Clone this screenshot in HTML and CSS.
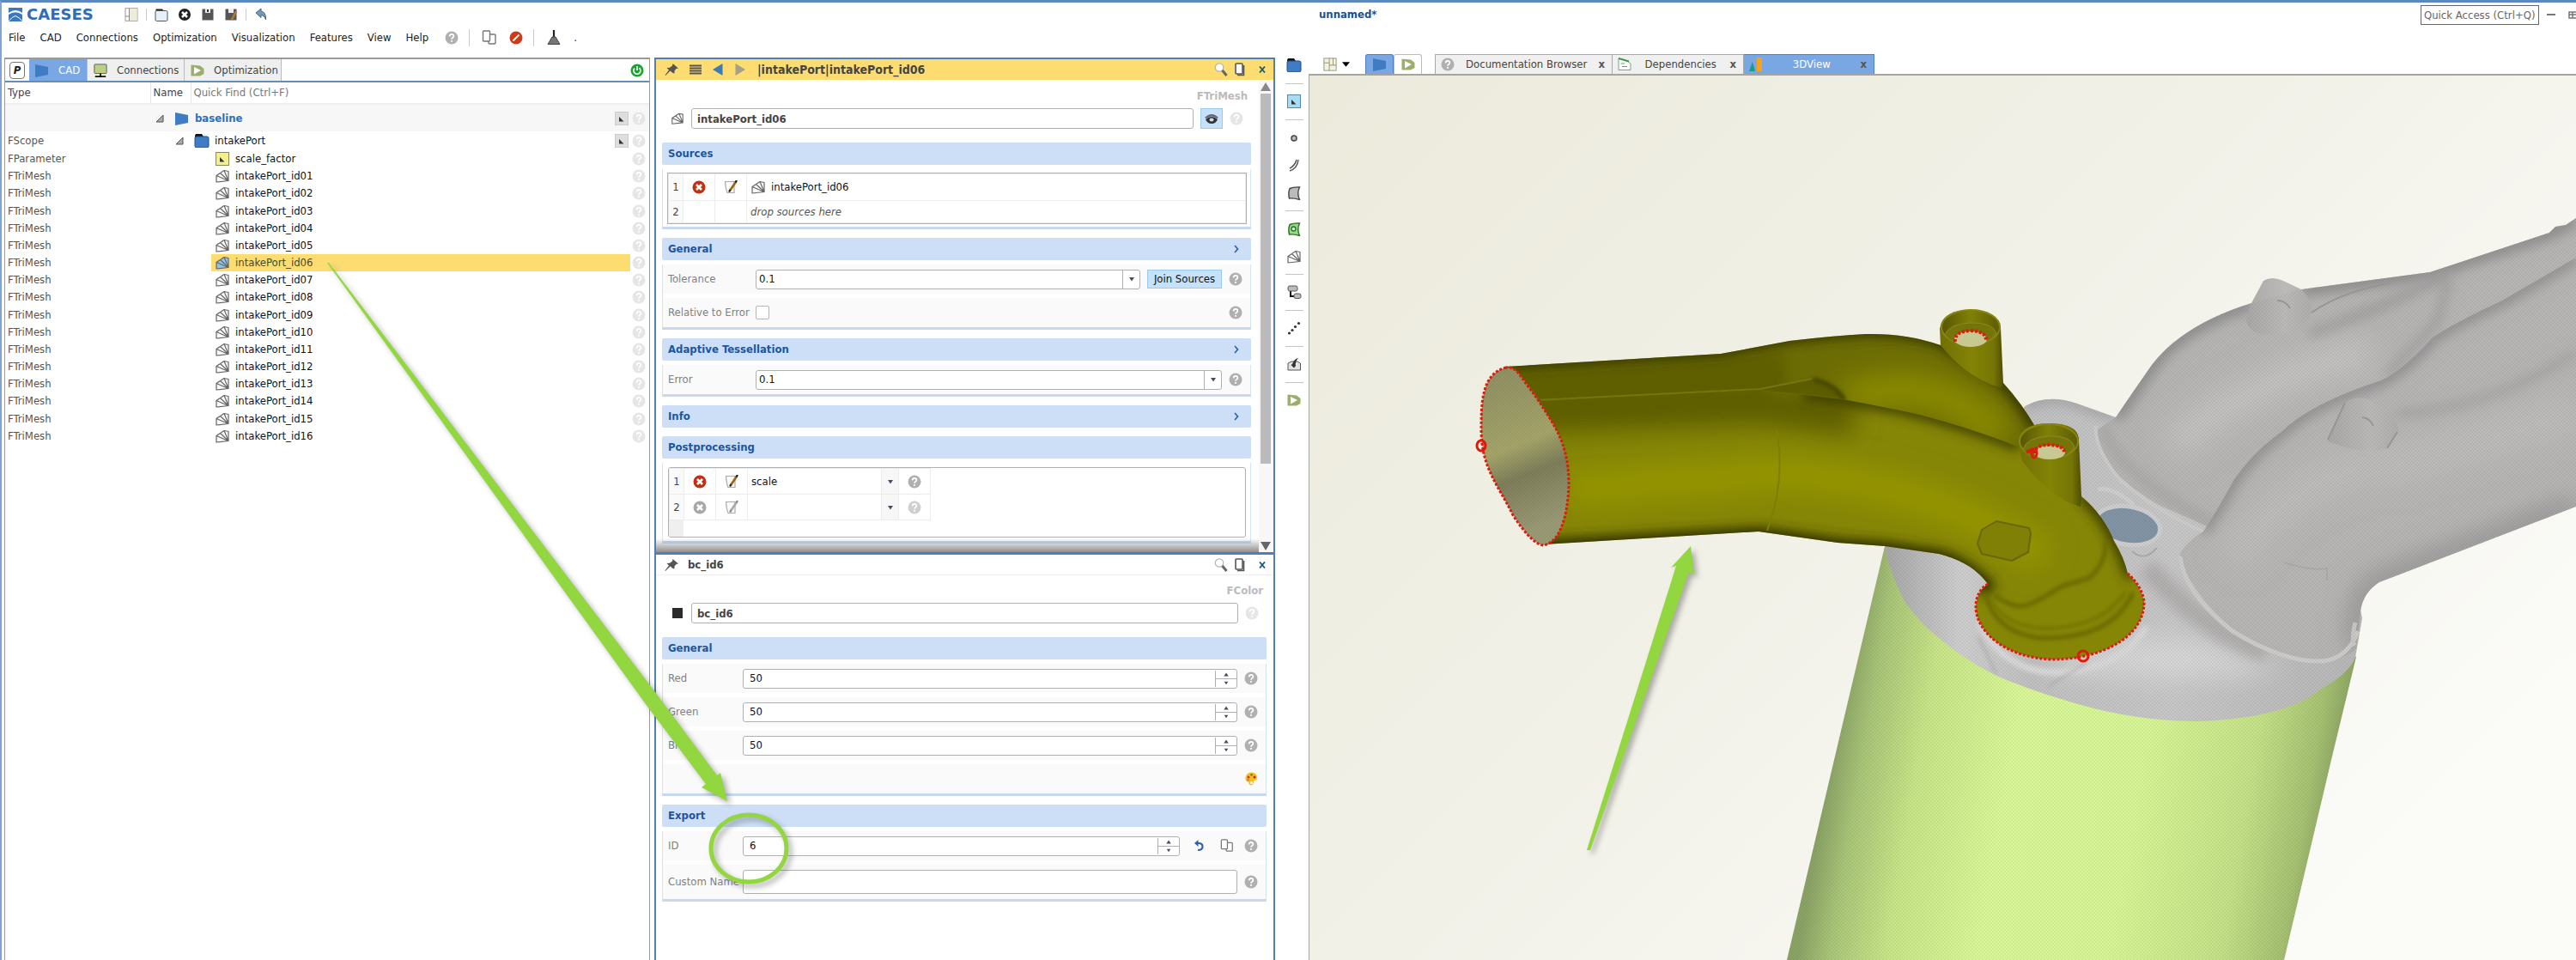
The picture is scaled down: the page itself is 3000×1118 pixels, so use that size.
FILE: index.html
```html
<!DOCTYPE html>
<html lang="en">
<head>
<meta charset="utf-8">
<title>CAESES - unnamed*</title>
<link rel="stylesheet" href="styles.css">
</head>
<body>
<svg class="sprite" aria-hidden="true">
  <symbol id="help" viewBox="0 0 16 16"><circle cx="8" cy="8" r="7.5" fill="currentColor"/><path d="M5.6 6.4Q5.700 3.900 8 3.900T10.400 6Q10.400 7.100 9.200 7.800T8 9.800" fill="none" stroke="#fff" stroke-width="1.700"/><rect x="7.100" y="11" width="1.800" height="1.800" fill="#fff"/></symbol>
  <symbol id="mesh" viewBox="0 0 18 16"><path d="M2 7.500 11 1.500 16 2.500V13.500L2 15Z" fill="var(--fill,#fafafa)"/><path d="M2 7.500 11 1.500 16 2.500V13.500L2 15ZM2 7.500 16 13.500 6.500 4.500M16 13.500 11 1.500" fill="none" stroke="#666" stroke-width="1.200" stroke-linejoin="round"/></symbol>
  <symbol id="trapezoid" viewBox="0 0 18 16"><path d="M1 1 16 4V13L1 16Z" fill="#3f7cc4"/></symbol>
  <symbol id="scope" viewBox="0 0 18 16"><path d="M2 0H9L11 3V8H1V2Z" fill="#111"/><rect x="1" y="3" width="16" height="13" rx="2" fill="#3f7cc4" stroke="#1d4f8c"/></symbol>
  <symbol id="param" viewBox="0 0 16 16"><rect x=".5" y=".5" width="15" height="15" fill="var(--fill,#f3f08d)" stroke="var(--edge,#8a8a55)"/><path d="M5 6V11.500H10.500Z" fill="#333"/></symbol>
  <symbol id="tri" viewBox="0 0 10 10"><path d="M9 1V9H1Z" fill="#aaa" stroke="#555"/></symbol>
  <symbol id="play" viewBox="0 0 18 16"><path d="M1.500 1.500 12 2.500 16.500 6V12L12 14.500H1.500Z" fill="#9bae6c"/><path d="M5 4 13 8 5 12.500Z" fill="#fff"/></symbol>
  <symbol id="delete" viewBox="0 0 16 16"><circle cx="8" cy="8" r="7.500" fill="var(--fill,#c22f12)"/><path d="M5 5 11 11M11 5 5 11" stroke="#fff" stroke-width="2.600"/></symbol>
  <symbol id="edit" viewBox="0 0 16 16"><path d="M1.500 1.500H12V14.500H4Q2 10 1.500 1.500Z" fill="#fafafa" stroke="#aaa" stroke-width="1.200"/><path d="M14.500 1 7 12" stroke="var(--pen,#9a6310)" stroke-width="2.600"/><path d="M15 0 13.500 2.500M7.500 11 6 13.500" stroke="var(--tip,#222)" stroke-width="2.200"/></symbol>
  <symbol id="pin" viewBox="0 0 18 16"><path d="M10.500 1 17 6.500 14.500 7 12.500 9.500 12.500 12.500 10.500 12 7.500 9.500 2 15 1.500 14.500 6 8.500 3.500 6 7 5.800 10 3.500Z" fill="#555"/></symbol>
  <symbol id="search" viewBox="0 0 16 16"><circle cx="6" cy="5.500" r="4.700" fill="#fff" stroke="#b5b5a8" stroke-width="1.300"/><path d="M9.500 9 14.500 15" stroke="#666" stroke-width="3"/></symbol>
  <symbol id="window" viewBox="0 0 12 16"><rect x="1" y="1" width="8" height="12" rx="1" fill="#fff" stroke="#555" stroke-width="1.600"/><path d="M10.500 3V14.500H3" fill="none" stroke="#555" stroke-width="1.600"/></symbol>
  <symbol id="copy" viewBox="0 0 18 18"><rect x="8" y="5" width="8" height="11" rx="1" fill="#fff" stroke="#777" stroke-width="1.400"/><rect x="1.500" y="1" width="8" height="12" rx="1" fill="#fff" stroke="#777" stroke-width="1.400"/></symbol>
  <symbol id="close" viewBox="0 0 8 8"><path d="M1 0.500 7 7.500M7 0.500 1 7.500" stroke="#1c5a70" stroke-width="1.800"/></symbol>
  <symbol id="down" viewBox="0 0 8 6"><path d="M1 1H7L4 5.500Z" fill="#444c66"/></symbol>
  <symbol id="up" viewBox="0 0 8 6"><path d="M1 5H7L4 .5Z" fill="#444c66"/></symbol>
  <symbol id="chev" viewBox="0 0 6 10"><path d="M1 1 4.500 5 1 9" fill="none" stroke="#2b62a8" stroke-width="1.700"/></symbol>
  <symbol id="layout" viewBox="0 0 18 18"><rect x="1" y="1" width="16" height="16" fill="#f3f3df" stroke="#8c8c78"/><path d="M8 1V17M1 7H8M8 10H17M13 1V10" stroke="#8c8c78"/></symbol>
</svg>

<div class="app">
  <header class="top">
    <div class="top-left">
      <div class="titlebar">
        <svg class="logo-mark" viewBox="0 0 16 16" aria-hidden="true"><rect width="16" height="16" fill="#3a78c0"/><path d="M0 6Q8 0 16 6V8Q8 2.500 0 8Z" fill="#fff"/><path d="M0 15.500Q5 10 8 9.500 12 11 16 15.500" fill="none" stroke="#fff"/></svg>
        <span class="logo">CAESES</span>
        <div class="quick">
          <button aria-label="Layout"><svg viewBox="0 0 16 16"><rect x="1" y=".7" width="14" height="14.600" fill="#fff" stroke="#999"/><rect x="6" y="1" width="8.500" height="14" fill="#eeedd8"/><path d="M5.500 1V15M1 10H5.500" stroke="#888"/></svg></button>
          <i class="bar"></i>
          <button aria-label="Open"><svg viewBox="0 0 16 16"><path d="M1.500 1.500H9L11 4H1.500Z" fill="#222"/><rect x="1" y="3.500" width="14" height="12" rx="1.500" fill="#e4f0fa" stroke="#555"/></svg></button>
          <button aria-label="Close project"><svg viewBox="0 0 16 16"><circle cx="8" cy="8" r="7" fill="#222"/><path d="M5 5 11 11M11 5 5 11" stroke="#fff" stroke-width="2.500"/></svg></button>
          <button aria-label="Save"><svg viewBox="0 0 16 16"><path d="M1.500 1.500H14.500V14.500H1.500Z" fill="#555"/><path d="M5 1V6H11V1Z" fill="#eee"/><path d="M8 2V5" stroke="#333" stroke-width="2"/></svg></button>
          <button aria-label="Save as"><svg viewBox="0 0 16 16"><path d="M1.500 1.500H14.500V14.500H1.500Z" fill="#555"/><path d="M5 1V6H11V1Z" fill="#eee"/><path d="M14 4 9 14" stroke="#b07b35" stroke-width="2.500"/></svg></button>
          <i class="bar"></i>
          <button aria-label="Undo"><svg viewBox="0 0 16 16"><path d="M2 6 8 1V4Q14 5 13.500 14 12 9 8 8.500V11.500Z" fill="#6f9db5" stroke="#47697c"/></svg></button>
        </div>
      </div>
      <nav class="menu">
        <a href="#">File</a><a href="#">CAD</a><a href="#">Connections</a><a href="#">Optimization</a><a href="#">Visualization</a><a href="#">Features</a><a href="#">View</a><a href="#">Help</a>
        <div class="menu-tools">
          <svg class="i16 gray"><use href="#help"/></svg>
          <i class="bar tall"></i>
          <svg class="i18"><use href="#copy"/></svg>
          <svg class="i16" viewBox="0 0 16 16"><circle cx="8" cy="8" r="7.500" fill="#cc3a18"/><path d="M4.500 11.500 11.500 4.500" stroke="#fff" stroke-width="2"/></svg>
          <i class="bar tall"></i>
          <svg class="i18" viewBox="0 0 18 18"><path d="M9 0V9" stroke="#222" stroke-width="2.200"/><path d="M7 8H11L16 16.500H2Z" fill="#777" stroke="#444"/></svg>
          <span>.</span>
        </div>
      </nav>
    </div>
    <div class="top-right">
      <h1>unnamed*</h1>
      <input class="quick-access" aria-label="Quick Access" placeholder="Quick Access (Ctrl+Q)">
      <button class="win" aria-label="Minimize"><svg viewBox="0 0 12 12"><path d="M1 6H11" stroke="#777" stroke-width="2"/></svg></button>
      <button class="win restore" aria-label="Restore"><svg viewBox="0 0 9 12"><path d="M9 3H1V10H9M5 3V10M1 6H9" fill="none" stroke="#777" stroke-width="1.500"/></svg></button>
    </div>
  </header>

  <main class="main">
    <section class="tree">
      <div class="tree-tabs">
        <button class="p-tab"><b>P</b></button>
        <button class="tab active w-cad"><svg class="icon"><use href="#trapezoid"/></svg>CAD</button>
        <button class="tab w-con"><svg class="icon" viewBox="0 0 18 18"><rect x="1" y="1" width="16" height="12" rx="1" fill="#bccf84" stroke="#555"/><path d="M9 13V16M2 17H16" stroke="#111" stroke-width="2"/></svg>Connections</button>
        <button class="tab w-opt"><svg class="icon"><use href="#play"/></svg>Optimization</button>
        <svg class="i16 refresh" viewBox="0 0 16 16"><circle cx="8" cy="8" r="7.500" fill="#17a52c"/><path d="M5 5.500A4 4 0 1 0 10.500 5.200M8 3V8" fill="none" stroke="#fff" stroke-width="1.700"/></svg>
      </div>
      <table class="objects">
        <colgroup><col class="c-type"><col class="c-name"><col><col class="c-help"></colgroup>
        <thead><tr><th>Type</th><th>Name</th><th colspan="2" class="find">Quick Find (Ctrl+F)</th></tr></thead>
        <tbody>
          <tr class="root"><td></td><td colspan="2"><div class="node l0"><svg class="tw"><use href="#tri"/></svg><svg class="icon"><use href="#trapezoid"/></svg><b>baseline</b><svg class="badge"><use href="#param"/></svg></div></td><td><svg class="i16 faint"><use href="#help"/></svg></td></tr>
          <tr class="scope"><td>FScope</td><td colspan="2"><div class="node l1"><svg class="tw"><use href="#tri"/></svg><svg class="icon"><use href="#scope"/></svg>intakePort<svg class="badge"><use href="#param"/></svg></div></td><td><svg class="i16 faint"><use href="#help"/></svg></td></tr>
          <tr><td>FParameter</td><td colspan="2"><div class="node l2"><svg class="icon"><use href="#param"/></svg>scale_factor</div></td><td><svg class="i16 faint"><use href="#help"/></svg></td></tr>
          <tr><td>FTriMesh</td><td colspan="2"><div class="node l2"><svg class="icon"><use href="#mesh"/></svg>intakePort_id01</div></td><td><svg class="i16 faint"><use href="#help"/></svg></td></tr>
          <tr><td>FTriMesh</td><td colspan="2"><div class="node l2"><svg class="icon"><use href="#mesh"/></svg>intakePort_id02</div></td><td><svg class="i16 faint"><use href="#help"/></svg></td></tr>
          <tr><td>FTriMesh</td><td colspan="2"><div class="node l2"><svg class="icon"><use href="#mesh"/></svg>intakePort_id03</div></td><td><svg class="i16 faint"><use href="#help"/></svg></td></tr>
          <tr><td>FTriMesh</td><td colspan="2"><div class="node l2"><svg class="icon"><use href="#mesh"/></svg>intakePort_id04</div></td><td><svg class="i16 faint"><use href="#help"/></svg></td></tr>
          <tr><td>FTriMesh</td><td colspan="2"><div class="node l2"><svg class="icon"><use href="#mesh"/></svg>intakePort_id05</div></td><td><svg class="i16 faint"><use href="#help"/></svg></td></tr>
          <tr><td>FTriMesh</td><td colspan="2"><div class="node l2 selected"><svg class="icon"><use href="#mesh"/></svg>intakePort_id06</div></td><td><svg class="i16 faint"><use href="#help"/></svg></td></tr>
          <tr><td>FTriMesh</td><td colspan="2"><div class="node l2"><svg class="icon"><use href="#mesh"/></svg>intakePort_id07</div></td><td><svg class="i16 faint"><use href="#help"/></svg></td></tr>
          <tr><td>FTriMesh</td><td colspan="2"><div class="node l2"><svg class="icon"><use href="#mesh"/></svg>intakePort_id08</div></td><td><svg class="i16 faint"><use href="#help"/></svg></td></tr>
          <tr><td>FTriMesh</td><td colspan="2"><div class="node l2"><svg class="icon"><use href="#mesh"/></svg>intakePort_id09</div></td><td><svg class="i16 faint"><use href="#help"/></svg></td></tr>
          <tr><td>FTriMesh</td><td colspan="2"><div class="node l2"><svg class="icon"><use href="#mesh"/></svg>intakePort_id10</div></td><td><svg class="i16 faint"><use href="#help"/></svg></td></tr>
          <tr><td>FTriMesh</td><td colspan="2"><div class="node l2"><svg class="icon"><use href="#mesh"/></svg>intakePort_id11</div></td><td><svg class="i16 faint"><use href="#help"/></svg></td></tr>
          <tr><td>FTriMesh</td><td colspan="2"><div class="node l2"><svg class="icon"><use href="#mesh"/></svg>intakePort_id12</div></td><td><svg class="i16 faint"><use href="#help"/></svg></td></tr>
          <tr><td>FTriMesh</td><td colspan="2"><div class="node l2"><svg class="icon"><use href="#mesh"/></svg>intakePort_id13</div></td><td><svg class="i16 faint"><use href="#help"/></svg></td></tr>
          <tr><td>FTriMesh</td><td colspan="2"><div class="node l2"><svg class="icon"><use href="#mesh"/></svg>intakePort_id14</div></td><td><svg class="i16 faint"><use href="#help"/></svg></td></tr>
          <tr><td>FTriMesh</td><td colspan="2"><div class="node l2"><svg class="icon"><use href="#mesh"/></svg>intakePort_id15</div></td><td><svg class="i16 faint"><use href="#help"/></svg></td></tr>
          <tr><td>FTriMesh</td><td colspan="2"><div class="node l2"><svg class="icon"><use href="#mesh"/></svg>intakePort_id16</div></td><td><svg class="i16 faint"><use href="#help"/></svg></td></tr>
        </tbody>
      </table>
    </section>

    <section class="editors">
      <article class="editor first">
        <div class="editor-title yellow">
          <svg class="icon"><use href="#pin"/></svg>
          <svg class="i14" viewBox="0 0 14 14"><path d="M0 2.500H14M0 5.500H14M0 8.500H14M0 11.500H14" stroke="#555" stroke-width="2"/></svg>
          <button aria-label="Back"><svg viewBox="0 0 14 14"><path d="M12.500 0V14L1 7Z" fill="#3d7cae"/></svg></button>
          <button aria-label="Forward"><svg viewBox="0 0 14 14"><path d="M1.500 0V14L13 7Z" fill="#a5a088"/></svg></button>
          <h2>|intakePort|intakePort_id06</h2>
          <span class="title-tools"><svg class="i16"><use href="#search"/></svg><svg class="w12"><use href="#window"/></svg><svg class="x"><use href="#close"/></svg></span>
        </div>
        <div class="scroller">
          <div class="form wide-labels">
            <p class="kind">FTriMesh</p>
            <div class="name-row">
              <svg class="i16"><use href="#mesh"/></svg>
              <input aria-label="Name" value="intakePort_id06">
              <button class="eye" aria-label="Visible"><svg viewBox="0 0 16 16"><path d="M0 7Q8-1 16 7L14 8Q8 3 2 8Z" fill="#667"/><path d="M1 9Q8 3 15 9 13 14 8 14T1 9Z" fill="#333"/><ellipse cx="8" cy="9.500" rx="2.500" ry="2" fill="#cde"/></svg></button>
              <svg class="i16 faint"><use href="#help"/></svg>
            </div>
            <section class="group">
              <h3>Sources</h3>
              <div class="body boxed">
                <table class="list sources">
                  <colgroup><col class="n"><col class="b"><col class="b"><col></colgroup>
                  <tr class="used"><td>1</td><td><svg class="i16"><use href="#delete"/></svg></td><td><svg class="i16"><use href="#edit"/></svg></td><td class="txt"><div><svg class="icon"><use href="#mesh"/></svg>intakePort_id06</div></td></tr>
                  <tr><td>2</td><td></td><td></td><td class="txt drop">drop sources here</td></tr>
                </table>
              </div>
            </section>
            <section class="group">
              <h3>General<svg class="chev"><use href="#chev"/></svg></h3>
              <div class="body">
                <div class="row"><label for="tol">Tolerance</label><span class="combo"><select id="tol"><option>0.1</option></select><i><svg><use href="#down"/></svg></i></span><button class="join">Join Sources</button><svg class="i16 gray"><use href="#help"/></svg></div>
                <div class="row"><label for="rel">Relative to Error</label><input type="checkbox" id="rel"><svg class="i16 gray end"><use href="#help"/></svg></div>
              </div>
            </section>
            <section class="group">
              <h3>Adaptive Tessellation<svg class="chev"><use href="#chev"/></svg></h3>
              <div class="body">
                <div class="row"><label for="err">Error</label><span class="combo"><select id="err"><option>0.1</option></select><i><svg><use href="#down"/></svg></i></span><svg class="i16 gray"><use href="#help"/></svg></div>
              </div>
            </section>
            <section class="group"><h3>Info<svg class="chev"><use href="#chev"/></svg></h3></section>
            <section class="group">
              <h3>Postprocessing</h3>
              <div class="body boxed">
                <div class="list-frame">
                  <table class="list post">
                    <colgroup><col class="n"><col class="b"><col class="b"><col class="s"><col class="a"><col class="b"></colgroup>
                    <tr><td>1</td><td><svg class="i16"><use href="#delete"/></svg></td><td><svg class="i16"><use href="#edit"/></svg></td><td class="txt">scale</td><td class="arrow"><svg class="dn"><use href="#down"/></svg></td><td><svg class="i16 gray"><use href="#help"/></svg></td></tr>
                    <tr class="off"><td>2</td><td><svg class="i16"><use href="#delete"/></svg></td><td><svg class="i16"><use href="#edit"/></svg></td><td></td><td class="arrow"><svg class="dn"><use href="#down"/></svg></td><td><svg class="i16 pale"><use href="#help"/></svg></td></tr>
                  </table>
                  <i class="gutter"></i>
                </div>
              </div>
            </section>
          </div>
          <div class="scrollbar"><svg viewBox="0 0 12 10"><path d="M6 0 12 10H0Z" fill="#888"/></svg><i></i><svg viewBox="0 0 12 10"><path d="M0 0H12L6 10Z" fill="#666"/></svg></div>
        </div>
      </article>
      <article class="editor second">
        <div class="editor-title">
          <svg class="icon"><use href="#pin"/></svg>
          <h2>bc_id6</h2>
          <span class="title-tools"><svg class="i16"><use href="#search"/></svg><svg class="w12"><use href="#window"/></svg><svg class="x"><use href="#close"/></svg></span>
        </div>
        <div class="form">
          <p class="kind">FColor</p>
          <div class="name-row">
            <i class="swatch"></i>
            <input aria-label="Name" value="bc_id6">
            <svg class="i16 faint"><use href="#help"/></svg>
          </div>
          <section class="group">
            <h3>General</h3>
            <div class="body">
              <div class="row"><label for="r">Red</label><span class="spin"><input id="r" type="number" value="50"><i><svg><use href="#up"/></svg><svg><use href="#down"/></svg></i></span><svg class="i16 gray"><use href="#help"/></svg></div>
              <div class="row"><label for="g">Green</label><span class="spin"><input id="g" type="number" value="50"><i><svg><use href="#up"/></svg><svg><use href="#down"/></svg></i></span><svg class="i16 gray"><use href="#help"/></svg></div>
              <div class="row"><label for="b">Blue</label><span class="spin"><input id="b" type="number" value="50"><i><svg><use href="#up"/></svg><svg><use href="#down"/></svg></i></span><svg class="i16 gray"><use href="#help"/></svg></div>
              <div class="row"><svg class="i16 end" viewBox="0 0 16 16"><path d="M8.500 0.500Q15 1 15 7 15 10 11.500 10 11 15 8.500 15.500 5 15.500 5.500 12 1 11 1.500 7 2 1 8.500 .5Z" fill="#f5bd1f"/><circle cx="5" cy="6" r="1.500" fill="#c33"/><circle cx="8.500" cy="3.300" r="1.500" fill="#7a8a20"/><circle cx="12" cy="6" r="1.500" fill="#b2301c"/><circle cx="4.500" cy="9.300" r="1.200" fill="#b83"/><circle cx="8.500" cy="12.500" r="1.500" fill="#fff"/></svg></div>
            </div>
          </section>
          <section class="group">
            <h3>Export</h3>
            <div class="body">
              <div class="row"><label for="id">ID</label><span class="spin"><input id="id" type="number" value="6"><i><svg><use href="#up"/></svg><svg><use href="#down"/></svg></i></span><span class="row-tools"><button aria-label="Reset"><svg viewBox="0 0 16 16"><path d="M5 5H8Q12.500 5 12.500 9T7 13" fill="none" stroke="#2f62b0" stroke-width="2.200"/><path d="M7.500 1V9L3 5Z" fill="#2f62b0"/></svg></button><button aria-label="Copy"><svg viewBox="0 0 18 18"><use href="#copy"/></svg></button></span><svg class="i16 gray"><use href="#help"/></svg></div>
              <div class="row big"><label for="cn">Custom Name</label><input id="cn" type="text"><svg class="i16 gray"><use href="#help"/></svg></div>
            </div>
          </section>
        </div>
      </article>
    </section>

    <aside class="tools">
      <svg class="icon"><use href="#scope"/></svg>
      <hr>
      <svg class="icon blue"><use href="#param"/></svg>
      <hr>
      <div class="set">
        <svg class="icon" viewBox="0 0 16 16"><circle cx="8" cy="8" r="3" fill="#bbb" stroke="#444" stroke-width="1.500"/></svg>
        <svg class="icon" viewBox="0 0 16 16"><path d="M13 1Q12 11 3 14M11 1Q9 8 3 11" fill="none" stroke="#555" stroke-width="1.500"/></svg>
        <svg class="icon" viewBox="0 0 16 16"><path d="M3 2.500Q8 .5 14.500 1 11 8 14.500 15.500 8 13.500 2.500 14 1 8 3 2.500Z" fill="#bbb" stroke="#444" stroke-width="1.400"/></svg>
      </div>
      <hr>
      <div class="set">
        <svg class="icon" viewBox="0 0 16 16"><path d="M3 2.500Q8 .5 14.500 1 11 8 14.500 15.500 8 13.500 2.500 14 1 8 3 2.500Z" fill="#8edb80" stroke="#2d6b2a" stroke-width="1.400"/><circle cx="7.500" cy="7.500" r="2.500" fill="#cfc" stroke="#2d6b2a" stroke-width="1.300"/></svg>
        <svg class="icon"><use href="#mesh"/></svg>
      </div>
      <hr>
      <svg class="icon" viewBox="0 0 16 16"><path d="M4 7V13H9" fill="none" stroke="#111" stroke-width="2"/><rect x="1" y="1" width="11" height="6" rx="2" fill="#bbb" stroke="#555"/><rect x="8" y="10" width="8" height="5.500" rx="2" fill="#bbb" stroke="#555"/></svg>
      <hr>
      <svg class="icon" viewBox="0 0 16 16"><g fill="#333"><circle cx="2.500" cy="14" r="1.600"/><circle cx="6" cy="10.500" r="1.600"/><circle cx="9.500" cy="6.500" r="1.600"/><circle cx="13.500" cy="2.500" r="1.600"/></g></svg>
      <hr>
      <svg class="icon" viewBox="0 0 16 16"><path d="M1 7 5 5H12L15.500 7V15H1Z" fill="#e2e2e2" stroke="#555"/><path d="M13 1Q8 2 6 8L4.500 9 8 12.500 10 10Q9 5 13 1Z" fill="#333"/></svg>
      <hr>
      <svg class="icon"><use href="#play"/></svg>
    </aside>

    <section class="view">
      <div class="view-tabs">
        <button class="layout" aria-label="Window layout"><svg class="icon"><use href="#layout"/></svg><svg class="caret" viewBox="0 0 10 6"><path d="M0 0H10L5 6Z"/></svg></button>
        <button class="mini active" aria-label="CAD view"><svg class="icon"><use href="#trapezoid"/></svg></button>
        <button class="mini" aria-label="Optimization view"><svg class="icon"><use href="#play"/></svg></button>
        <div class="docs">
          <button class="doc w-doc"><svg class="i16 gray"><use href="#help"/></svg><span>Documentation Browser</span><b>x</b></button>
          <button class="doc w-dep"><svg class="i16" viewBox="0 0 16 16"><path d="M1 1 11 4 15 7V14.500H1Z" fill="#fff" stroke="#7aa57a"/><path d="M1 1 13 4.500" stroke="#3b9a48" stroke-width="2"/><path d="M3.500 7H8M5 10.500H11" stroke="#5aa862"/></svg><span>Dependencies</span><b>x</b></button>
          <button class="doc w-3d active"><svg class="i16" viewBox="0 0 16 16"><path d="M0 16 4 5 7 16Z" fill="#1a9a8e"/><rect x="9" width="6" height="16" fill="#f5a31d"/></svg><span>3DView</span><b>x</b></button>
        </div>
      </div>
      <svg class="scene" viewBox="1525 88 1475 1030" preserveAspectRatio="xMinYMin slice" role="img" aria-label="3D view of the intake port">
        <defs>
          <linearGradient id="bg" x1="0" y1="0" x2="1" y2=".7"><stop offset="0" stop-color="#ebeadb"/><stop offset=".5" stop-color="#f2f1e8"/><stop offset="1" stop-color="#fbfbf8"/></linearGradient>
          <linearGradient id="cyl" gradientUnits="userSpaceOnUse" x1="2130" y1="900" x2="2712" y2="1000"><stop offset="0" stop-color="#8ba466"/><stop offset=".06" stop-color="#a9c578"/><stop offset=".17" stop-color="#c8e588"/><stop offset=".35" stop-color="#daf897"/><stop offset=".6" stop-color="#d8f695"/><stop offset=".82" stop-color="#c5e288"/><stop offset=".94" stop-color="#a6c172"/><stop offset="1" stop-color="#869e5f"/></linearGradient>
          <linearGradient id="rim" gradientUnits="userSpaceOnUse" x1="2200" y1="0" x2="2750" y2="0"><stop offset="0" stop-color="#a9a9a9"/><stop offset=".15" stop-color="#cfcece"/><stop offset=".3" stop-color="#c2c1c1"/><stop offset=".6" stop-color="#c8c7c7"/><stop offset="1" stop-color="#b8b7b7"/></linearGradient>
          <linearGradient id="hole" x1="0" y1="0" x2=".2" y2="1"><stop offset="0" stop-color="#8e8e64"/><stop offset=".5" stop-color="#a5a56a"/><stop offset=".68" stop-color="#7f7f5c"/><stop offset="1" stop-color="#9b9b78"/></linearGradient>
          <linearGradient id="stub" x1="0" x2="1" y1="0" y2="0"><stop offset="0" stop-color="#707005"/><stop offset=".5" stop-color="#838306"/><stop offset=".85" stop-color="#757505"/><stop offset="1" stop-color="#4e4e03"/></linearGradient>
          <linearGradient id="bowl" x1="0" x2="1" y1="0" y2="0"><stop offset="0" stop-color="#565604"/><stop offset=".5" stop-color="#808008"/><stop offset="1" stop-color="#5c5c05"/></linearGradient>
          <linearGradient id="gstub" x1="0" x2="1" y1="0" y2="0"><stop offset="0" stop-color="#aaa9a8"/><stop offset=".6" stop-color="#bbbab8"/><stop offset="1" stop-color="#b0afae"/></linearGradient>
          <pattern id="dither" width="4" height="4" patternUnits="userSpaceOnUse"><path d="M0 0H2V2H0ZM2 2H4V4H2Z" fill="#000" fill-opacity=".05"/></pattern>
          <filter id="b3" filterUnits="userSpaceOnUse" x="1525" y="88" width="1600" height="1030"><feGaussianBlur stdDeviation="2"/></filter>
          <filter id="b6" filterUnits="userSpaceOnUse" x="1525" y="88" width="1600" height="1030"><feGaussianBlur stdDeviation="7"/></filter>
          <filter id="b14" filterUnits="userSpaceOnUse" x="1525" y="88" width="1600" height="1030"><feGaussianBlur stdDeviation="15"/></filter>
          <path id="backOlive" d="M1753 427 2004 412 2084 397Q2135 391 2173 389 2220 388 2260 402L2333 446Q2355 470 2372 500L2380 560 2150 520 1790 500Z"/>
          <path id="frontOlive" d="M1768 434 1795 467 2048 454 2146 465Q2195 474 2236 483 2300 500 2352 521L2424 578Q2450 600 2462 630 2474 650 2478 668 2492 680 2497 700C2498 743 2445 768 2390 768 2335 766 2300 735 2301 705Q2303 688 2315 680 2306 668 2294 660 2278 650 2258 645L2195 636 2140 632 2048 619 1798 634 1810 560Z"/>
          <path id="backGray" d="M2464 486Q2485 455 2506 425 2542 378 2622 353L2680 337 2830 317 2969 271 2976 264 2988 262 3000 254V520L2586 620 2514 588Q2440 545 2443 500Z"/>
          <path id="frontGray" d="M2566 619Q2585 590 2602 558 2625 525 2657 503 2690 470 2773 443 2800 430 2833 393 2860 375 2914 350L3000 300V590L2771 678Q2752 690 2749 712L2744 755Q2722 778 2666 766 2600 738 2568 700 2537 660 2539 645 2545 632 2566 619Z"/>
          <path id="disk" d="M2195 636Q2200 665 2218 700 2235 725 2258 743 2290 770 2325 787 2360 802 2400 814 2480 840 2559 840 2660 837 2702 803 2735 785 2743 766L2751 720 2748 705 2600 560 2464 486 2419 470Q2385 458 2358 473L2300 560Z"/>
          <path id="cylinder" d="M2195 636 2149 830 2081 1118H2660L2715 885 2744 765 2500 600Z"/>
          <path id="opening" d="M1754 428C1725 435 1725 470 1725 500 1725 545 1745 565 1762 600Q1785 635 1798 635C1822 630 1827 585 1827 560 1826 515 1810 495 1790 464L1768 434Q1762 427 1754 428Z"/>
          <clipPath id="cbo"><use href="#backOlive"/></clipPath><clipPath id="cfo"><use href="#frontOlive"/></clipPath>
          <clipPath id="cbg"><use href="#backGray"/></clipPath><clipPath id="cfg"><use href="#frontGray"/></clipPath>
          <clipPath id="cdk"><use href="#disk"/></clipPath>
          <clipPath id="ghost"><use href="#cylinder"/><use href="#disk"/><use href="#backGray"/><use href="#frontGray"/></clipPath>
        </defs>
        <rect x="1525" y="88" width="1475" height="1030" fill="url(#bg)"/>
        <use href="#cylinder" fill="url(#cyl)"/>
        <use href="#disk" fill="url(#rim)"/>
        <g clip-path="url(#cdk)">
          <path d="M2380 780Q2440 735 2560 745L2660 775Q2600 795 2500 790T2380 780Z" fill="#dcdbdb" opacity=".8" filter="url(#b14)"/>
          <path d="M2500 660Q2560 730 2640 760" fill="none" stroke="#b0afae" stroke-width="24" filter="url(#b6)"/>
          <path d="M2305 725Q2335 785 2400 783 2470 778 2500 730" fill="none" stroke="#dad9da" stroke-width="8" filter="url(#b3)"/>
          <path d="M2304 742 2325 785M2385 800Q2400 790 2430 772" fill="none" stroke="#aaa9a9" stroke-width="2" filter="url(#b3)"/>
          <path d="M2358 473Q2385 458 2419 470L2464 486" fill="none" stroke="#999" stroke-width="8" filter="url(#b6)"/>
        </g>
        <ellipse cx="2478" cy="612" rx="38" ry="22" transform="rotate(10 2478 612)" fill="#8395a5" stroke="#cfcfd0" stroke-width="5"/>
        <path d="M2443 570Q2460 566 2485 588" fill="none" stroke="#cfcfd0" stroke-width="5"/>
        <path d="M2512 638Q2497 655 2483 642" fill="none" stroke="#adacac" stroke-width="2"/>

        <use href="#backGray" fill="#b7b6b5"/>
        <g clip-path="url(#cbg)">
          <path d="M2464 486Q2485 455 2506 425 2542 378 2622 353M2680 337 2830 317 2969 271 3000 254" fill="none" stroke="#8e8d8d" stroke-width="16" filter="url(#b6)"/>
          <path d="M2690 390Q2760 365 2850 320" fill="none" stroke="#a09f9e" stroke-width="12" filter="url(#b6)"/>
          <path d="M2530 520Q2620 440 2760 410" fill="none" stroke="#c4c3c1" stroke-width="40" filter="url(#b14)"/>
          <path d="M2852 325 2838 375 2780 437" fill="none" stroke="#979695" stroke-width="6" filter="url(#b6)"/>
          <path d="M2449 492Q2455 545 2580 612" fill="none" stroke="#a3a2a1" stroke-width="8" filter="url(#b6)"/>
        </g>
        <path d="M2622 353 2636 327Q2645 321 2659 327L2680 337Q2698 355 2688 372 2665 395 2644 389 2618 390 2616 372Z" fill="url(#gstub)"/>
        <path d="M2652 350Q2662 350 2667 359M2692 364Q2730 338 2785 330" fill="none" stroke="#9b9a98" stroke-width="2"/>
        <path d="M2441 496Q2438 520 2468 558 2510 595 2566 619" fill="none" stroke="#cdcccb" stroke-width="4"/>

        <use href="#frontGray" fill="#b7b6b5"/>
        <g clip-path="url(#cfg)">
          <path d="M2566 619Q2585 590 2602 558 2625 525 2657 503 2690 470 2773 443 2800 430 2833 393 2860 375 2914 350L3000 300" fill="none" stroke="#918f8f" stroke-width="14" filter="url(#b6)"/>
          <path d="M3000 590 2771 678Q2752 690 2749 712L2744 755" fill="none" stroke="#8a8988" stroke-width="18" filter="url(#b14)"/>
          <path d="M2790 482Q2900 478 3000 410" fill="none" stroke="#a2a19f" stroke-width="8" filter="url(#b6)"/>
          <path d="M2600 650Q2680 540 2800 540L3000 480" fill="none" stroke="#bfbebc" stroke-width="40" filter="url(#b14)"/>
          <path d="M2660 655Q2690 665 2710 662V676" fill="none" stroke="#acabaa" stroke-width="2"/>
        </g>
        <path d="M2711 514 2731 469Q2745 460 2760 466L2784 482Q2796 494 2792 505L2780 522Q2750 530 2711 514Z" fill="url(#gstub)"/>
        <path d="M2792 503 2780 522M2751 486Q2760 487 2764 496M2711 512 2731 469" fill="none" stroke="#9b9a98" stroke-width="2"/>
        <path d="M2539 648Q2543 690 2600 735 2660 772 2705 770 2735 766 2746 735" fill="none" stroke="#cdcccb" stroke-width="5"/>
        <path d="M2743 725Q2738 745 2742 752" fill="none" stroke="#c8c7c6" stroke-width="5"/>
        <rect x="2080" y="250" width="920" height="868" fill="url(#dither)" clip-path="url(#ghost)"/>

        <use href="#backOlive" fill="#6c6c04"/>
        <g clip-path="url(#cbo)">
          <path d="M1740 460 2080 436" stroke="#5f5f03" stroke-width="50" filter="url(#b6)"/>
          <path d="M1753 424 2004 408 2084 393Q2135 387 2173 385 2220 384 2262 398L2333 446Q2355 470 2372 500" fill="none" stroke="#2b2b00" stroke-width="12" filter="url(#b6)"/>
          <path d="M2150 465Q2260 430 2330 510" fill="none" stroke="#8a8a05" stroke-width="40" filter="url(#b14)"/>
          <path d="M2050 454 2110 441Q2138 448 2148 466" fill="#5c5c03" filter="url(#b3)"/>
          <path d="M1790 466 2050 453 2110 441" fill="none" stroke="#76760f" stroke-width="2"/>
          <path d="M2112 442Q2138 448 2148 466" fill="none" stroke="#444400" stroke-width="5" filter="url(#b3)"/>
        </g>
        <path d="M2259 383Q2262 361 2294 361 2328 361 2330 382L2333 447 2331 452Q2290 440 2260 402Z" fill="url(#stub)"/>
        <ellipse cx="2295" cy="381" rx="34" ry="20" fill="url(#bowl)" stroke="#85850f" stroke-width="2"/>
        <path d="M2265 390Q2270 377 2295 376T2325 388Q2318 401 2295 401T2265 390Z" fill="#74740a" stroke="#8c8c1a"/>
        <ellipse cx="2295" cy="395" rx="19" ry="9" fill="#c8c892"/>
        <path d="M2277 398Q2276 386 2295 385 2313 386 2313 396" fill="none" stroke="#e01b0c" stroke-width="4" stroke-dasharray="3 2"/>

        <use href="#frontOlive" fill="#858506"/>
        <g clip-path="url(#cfo)">
          <path d="M1760 482 2048 470 2160 484" fill="none" stroke="#5c5c03" stroke-width="46" filter="url(#b14)"/>
          <path d="M1760 472 2060 461" fill="none" stroke="#5e5e03" stroke-width="22" filter="url(#b6)"/>
          <path d="M2100 458Q2195 470 2236 481 2300 498 2352 519" fill="none" stroke="#383800" stroke-width="13" filter="url(#b6)"/>
          <path d="M1825 570 2070 552Q2250 560 2380 650" fill="none" stroke="#949406" stroke-width="40" filter="url(#b14)"/>
          <path d="M1790 638 2048 623 2140 636 2195 640 2258 649Q2290 658 2318 688" fill="none" stroke="#2c2c00" stroke-width="18" filter="url(#b6)"/>
          <path d="M2424 576Q2450 598 2464 628 2476 650 2482 672" fill="none" stroke="#333300" stroke-width="13" filter="url(#b6)"/>
          <path d="M2323 693Q2340 706 2353 706 2366 706 2400 683L2433 673Q2454 655 2452 630" fill="none" stroke="#6a6a04" stroke-width="5" filter="url(#b3)"/>
          <path d="M2312 690Q2322 736 2375 743 2460 745 2484 690" fill="none" stroke="#6b6b04" stroke-width="5" filter="url(#b3)"/>
          <path d="M2318 700Q2340 732 2385 732 2450 730 2476 688" fill="none" stroke="#707004" stroke-width="3" filter="url(#b3)"/>
          <path d="M2069 500Q2080 560 2058 618" fill="none" stroke="#7e7e06" stroke-width="2"/>
        </g>
        <path d="M2308 617 2325 607 2363 615 2365 621 2362 643 2343 653 2308 645 2303 633Z" fill="#808006" stroke="#68680a" stroke-width="2" stroke-linejoin="round"/>
        <path d="M2350 514Q2353 493 2387 493 2420 493 2421 512L2424 578 2423 590Q2390 582 2355 537Z" fill="url(#stub)"/>
        <ellipse cx="2386" cy="514" rx="34" ry="20" fill="url(#bowl)" stroke="#85850f" stroke-width="2"/>
        <path d="M2356 523Q2361 509 2386 508T2416 520Q2410 534 2386 534T2356 523Z" fill="#74740a" stroke="#8c8c1a"/>
        <ellipse cx="2387" cy="527" rx="18" ry="8" fill="#c8c892"/>
        <g fill="none" stroke="#e01b0c">
          <path d="M2369 528Q2370 518 2387 518 2404 519 2404 527" stroke-width="4" stroke-dasharray="3 2"/>
          <ellipse cx="2369" cy="528" rx="3" ry="5" stroke-width="3"/>
          <path d="M2360 527 2368 523" stroke-width="4"/>
          <use href="#opening" fill="url(#hole)" stroke-width="3" stroke-dasharray="3 2"/>
          <ellipse cx="1725" cy="519" rx="5" ry="6" stroke-width="3"/>
          <path d="M2315 680Q2302 688 2301 705C2300 735 2335 766 2390 768 2445 768 2498 743 2497 700Q2494 682 2478 668" stroke-width="3" stroke-dasharray="3 2"/>
          <circle cx="2426" cy="764" r="6" stroke-width="3"/>
        </g>
        <use href="#opening" fill="url(#dither)"/>
      </svg>
    </section>
  </main>

  <svg class="marks" aria-hidden="true">
    <g fill="#93d740">
      <path d="M381 306 383 306 763 806 835 903 839 900 847 933 817 917 822 913 752 820Z"/>
      <path d="M1848 990 1952 659 1946 661 1969 636 1973 669 1967 666 1852 990Z"/>
    </g>
    <ellipse cx="872" cy="988" rx="44" ry="39" fill="none" stroke="#93d740" stroke-width="5"/>
  </svg>
</div>
</body>
</html>
```
FILE: styles.css
```css
* { box-sizing: border-box; }

body {
  margin: 0;
  font: 13px/18px "DejaVu Sans Condensed", "DejaVu Sans", sans-serif;
  color: #222;
  background: #fff;
}

button, input, select { font: inherit; color: inherit; margin: 0; }
button { padding: 0; border: 0; background: none; }
h1, h2, h3, p { margin: 0; font-size: 13px; }
svg { display: block; flex: none; }
.sprite { display: none; }
.icon, .i18 { width: 18px; height: 16px; }
.i18 { height: 18px; }
.i16 { width: 16px; height: 16px; }
.i14 { width: 14px; height: 14px; }
.gray { color: #b0b0b0; }
.pale { color: #cfcfcf; }
.faint { color: #e6e6e6; }
.end { margin-left: auto; }

.app {
  position: relative;
  display: flex;
  flex-direction: column;
  min-height: 100vh;
  border-top: 3px solid #5b88bf;
  border-left: 2px solid #7fa5d6;
  overflow: hidden;
}

/* title bar and menu */
.top { display: grid; grid-template-columns: 1534fr 1464fr; height: 57px; flex: none; }
.titlebar { display: flex; align-items: center; height: 28px; padding-left: 8px; }
.logo-mark { width: 16px; height: 16px; }
.logo { margin-left: 5px; width: 114px; font: bold 18px/18px "DejaVu Sans", sans-serif; color: #2f6db5; }
.quick { display: flex; align-items: center; gap: 11px; }
.quick svg { width: 16px; height: 16px; }
.bar { width: 1px; height: 14px; margin: 0 -2px; background: #ccc; }
.bar.tall { height: 20px; margin: 0; }
.menu { display: flex; align-items: center; gap: 17px; height: 26px; padding-left: 8px; }
.menu a { color: #222; text-decoration: none; }
.menu-tools { display: flex; align-items: center; gap: 12px; margin-left: 2px; }
.menu-tools .i18 { margin: 0 2px; }
.top-right { display: flex; align-items: center; height: 28px; }
h1 { margin-right: auto; color: #1d4f91; }
.quick-access { width: 138px; height: 23px; padding: 0 3px; border: 1px solid #666; background: #fff; }
.quick-access::placeholder { color: #666; opacity: 1; }
.win { margin-left: 8px; }
.win svg { width: 12px; height: 12px; }
.win.restore { margin-left: 14px; }
.win.restore svg { width: 9px; }

.main { flex: 1; display: grid; grid-template-columns: 756fr 728fr 38fr 1476fr; }

/* object tree */
.tree { margin: 7px 1px 0 3px; border: 1px solid #9a9a9a; border-top-width: 2px; border-bottom: 0; }
.tree-tabs { display: flex; align-items: stretch; height: 27px; border-bottom: 2px solid #5f8fbf; }
.p-tab { width: 28px; display: grid; place-items: center; }
.p-tab b { width: 18px; height: 20px; border: 1px solid #777; border-radius: 4px; font-style: italic; }
.tab { display: flex; align-items: center; padding-left: 6px; gap: 10px; background: #efefef; border-right: 1px solid #bbb; color: #444; }
.tab.active { background: #79a7e3; color: #fff; }
.w-cad { width: 68px; }
.w-con { width: 113px; }
.w-opt { width: 113px; }
.refresh { margin: auto 6px auto auto; }
.objects { width: 100%; table-layout: fixed; border-collapse: collapse; }
.c-type { width: 169px; }
.c-name { width: 47px; }
.c-help { width: 20px; }
.objects th { height: 25px; padding: 0 3px; text-align: left; font-weight: normal; color: #444; border-bottom: 2px solid #eee; border-right: 1px solid #e6e6e6; }
.objects th.find { color: #777; border-right: 0; }
.objects td { height: 20px; padding: 0; color: #555; white-space: nowrap; }
.objects td:first-child { padding-left: 3px; }
.objects tr:nth-child(6n) td { height: 21px; }
.objects .root td { height: 32px; background: #f7f7f7; }
.objects .scope td { height: 22px; }
.node { display: flex; align-items: center; gap: 6px; color: #111; }
.node b { color: #2d6fb8; }
.l0 { margin-left: 6px; }
.l1 { margin-left: 29px; }
.l2 { margin-left: 71px; margin-right: 2px; padding-left: 4px; height: 20px; }
.selected { background: #fddd72; color: #444a30; --fill: #8ec4e8; }
.tw { width: 10px; height: 10px; margin-right: 6px; }
.badge { width: 16px; height: 16px; margin-left: auto; margin-right: 4px; --fill: #ddd; --edge: #ccc; }

/* editors */
.editors { margin: 7px 1px 0 4px; border: 2px solid #527fae; border-bottom: 0; }
.editor-title { display: flex; align-items: center; gap: 10px; height: 24px; padding: 0 9px; border-bottom: 1px solid #eee; }
.editor-title.yellow { background: #fddd72; border-color: #fddd72; gap: 12px; }
.editor-title button svg { width: 14px; height: 14px; }
h2 { color: #444; }
.yellow h2 { margin-left: 1px; font-size: 14px; }
.title-tools { display: flex; align-items: center; margin-left: auto; gap: 8px; }
.w12 { width: 12px; height: 16px; }
.x { width: 8px; height: 8px; margin-left: 8px; }
.scroller { position: relative; display: flex; }
.scroller::after { content: ""; position: absolute; left: 0; right: 17px; bottom: 0; height: 16px; background: linear-gradient(rgba(120,120,120,0), #909090); }
.form { flex: 1; padding: 9px 8px 0 7px; }
.first .form { padding: 10px 9px 10px 7px; }
.kind { padding-right: 4px; text-align: right; font-weight: bold; color: #bbb; }
.name-row { display: flex; align-items: center; gap: 8px; height: 24px; margin: 5px 9px 16px 10px; }
.name-row input { flex: 1; height: 24px; font-weight: bold; color: #444; padding: 0 6px; }
.name-row input, .row > input[type="text"] { border: 1px solid #b0b0b0; border-radius: 3px; background: #fff; }
.swatch { width: 12px; height: 12px; margin: 0 2px; background: #2b2b2b; }
.eye { width: 26px; height: 24px; display: grid; place-items: center; background: #c5e2fa; border: 1px solid #9acbee; }
.eye svg { width: 16px; height: 16px; }

.group + .group { margin-top: 10px; }
h3 { display: flex; align-items: center; height: 26px; padding: 0 14px 0 7px; background: #cddff6; color: #1d55a0; border-radius: 2px; }
.chev { width: 6px; height: 10px; margin-left: auto; }
.body { display: flex; flex-direction: column; gap: 5px; margin-top: 5px; border: 1px solid #d3e4f2; border-width: 0 1px 3px; border-bottom-color: #c6d9ef; }
.row { display: flex; align-items: center; gap: 8px; height: 34px; padding: 0 9px 0 6px; background: #fafafa; }
.row.big { height: 40px; }
.row label { width: 79px; white-space: nowrap; color: #808080; }
.wide-labels .row label { width: 94px; }
.row > input[type="text"] { flex: 1; height: 28px; }
.combo, .spin { flex: 1; display: flex; height: 23px; border: 1px solid #b0b0b0; border-radius: 3px; background: #fff; }
.combo select, .spin input { flex: 1; min-width: 0; border: 0; background: none; appearance: none; color: #111; }
.combo select { padding: 0 3px; }
.spin input { padding: 0 7px; appearance: textfield; }
.spin input::-webkit-inner-spin-button { appearance: none; }
.combo i { width: 20px; display: grid; place-items: center; border-left: 1px solid #b0b0b0; }
.combo svg, .spin svg, .dn { width: 8px; height: 6px; }
.spin i { width: 25px; margin: 1px 0; display: grid; grid-template-rows: 1fr 1fr; border-left: 1px solid #b0b0b0; }
.spin svg { width: 100%; height: 100%; padding: 2px 8px; }
.spin svg + svg { border-top: 1px solid #b0b0b0; }
.join { width: 87px; height: 22px; background: #c5e2fa; border: 1px solid #9acbee; color: #111; }
.row input[type="checkbox"] { appearance: none; width: 16px; height: 16px; border: 1px solid #b5b5b5; border-radius: 2px; background: #fff; }
.row-tools { display: flex; gap: 9px; margin-left: 2px; }
.row-tools button { width: 24px; height: 18px; display: grid; place-items: center; }
.row-tools svg { width: 16px; height: 16px; }

.boxed { padding: 5px 5px 4px 6px; }
.list { table-layout: fixed; border-collapse: collapse; }
.list td { padding: 0; border: 1px solid #ececec; text-align: center; color: #444; }
.list td:first-child { background: #fafafa; }
.list td svg { margin: auto; }
.list .n { width: 17px; }
.list .b { width: 37px; }
.list .s { width: 156px; }
.list .a { width: 20px; }
.list .txt { text-align: left; padding-left: 4px; color: #111; }
.list .txt div { display: flex; align-items: center; gap: 6px; }
.list .txt div svg { margin: 0; }
.list .drop { font-style: italic; color: #555; }
.sources { width: 100%; outline: 1px solid #b0b0b0; }
.sources tr { height: 26px; }
.sources .used { height: 31px; }
.list-frame { height: 82px; border: 1px solid #b0b0b0; border-radius: 3px; overflow: hidden; }
.post tr { height: 30px; }
.post .arrow { background: #f7f7f7; }
.gutter { display: block; width: 17px; height: 20px; background: #efefef; }
.off { --fill: #a8a8a8; --pen: #aaa; --tip: #888; }

.scrollbar { width: 17px; padding: 3px 3px 2px 2px; display: flex; flex-direction: column; background: #f7f7f7; }
.scrollbar svg { width: 12px; height: 10px; }
.scrollbar i { flex: 432; margin: 3px 0 0; background: #bababa; }
.scrollbar svg:last-child { margin-top: 91px; }
.second { border-top: 3px solid #527fae; }

/* creation tools */
.tools { display: flex; flex-direction: column; align-items: center; padding-top: 6px; padding-left: 4px; gap: 10px; }
.tools hr { width: 21px; height: 1px; margin: 0; border: 0; background: #c4c4c4; }
.tools > svg { margin: 2px 0 3px; }
.tools .set { display: flex; flex-direction: column; gap: 16px; margin: 3px 0 2px; }
.blue { --fill: #a5ddf5; --edge: #5589a5; }

/* 3D view */
.view { display: flex; flex-direction: column; padding-top: 3px; }
.view-tabs { display: flex; align-items: stretch; height: 23px; padding-left: 16px; }
.layout { display: flex; align-items: center; gap: 5px; width: 50px; }
.caret { width: 9px; height: 6px; }
.mini { width: 33px; display: grid; place-items: center; border: 1px solid #bbb; border-bottom: 0; border-radius: 3px 3px 0 0; }
.docs { display: flex; margin-left: 15px; }
.doc { display: flex; align-items: center; padding: 0 8px 0 6px; background: #f0f0f0; border: 1px solid #aaa; border-width: 1px 1px 0 1px; color: #444; }
.doc + .doc { border-left: 0; }
.doc span { margin: auto; white-space: nowrap; }
.doc b { color: #555; }
.mini.active, .doc.active { background: #79a7e3; color: #fff; border-color: #4f7fc0; }
.w-doc { width: 207px; }
.w-dep { width: 153px; }
.w-3d { width: 152px; }
.scene { flex: 1; width: 100%; height: 0; min-height: 1032px; border-top: 2px solid #a5a5a0; border-left: 1px solid #a5a5a0; }

/* annotations drawn over the window */
.marks { position: absolute; top: -3px; left: -2px; width: 100%; height: 100%; pointer-events: none; filter: drop-shadow(4px 4px 3px rgba(60,60,60,.4)); }
```
